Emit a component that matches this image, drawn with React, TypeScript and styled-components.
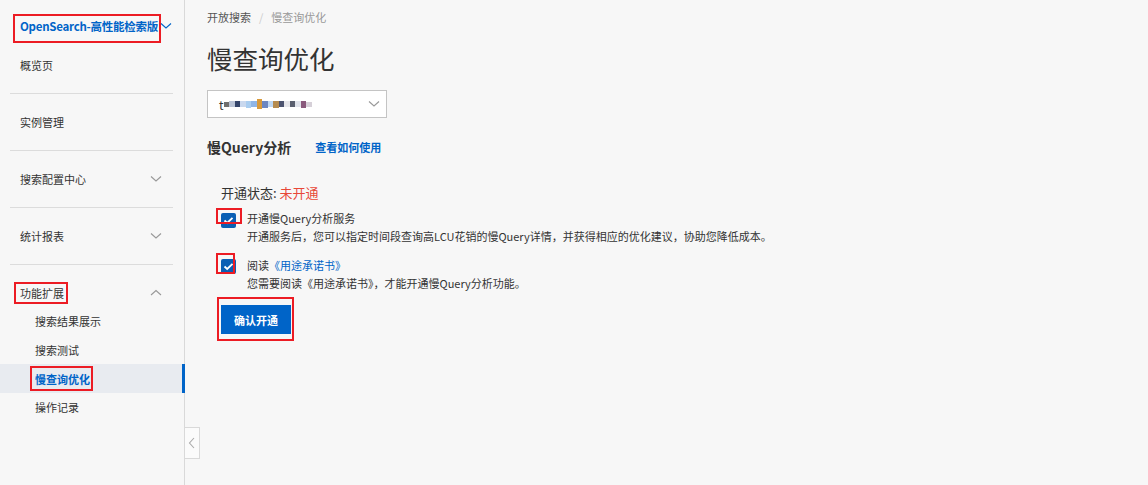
import styled, { createGlobalStyle } from "styled-components";

const GlobalStyle = createGlobalStyle`
  html, body {
    margin: 0;
    padding: 0;
    background: #f7f7f7;
    font-family: "Noto Sans CJK SC", "Noto Sans", sans-serif;
    color: #333;
  }
`;

const Page = styled.div`
  display: flex;
  width: 1148px;
  height: 485px;
  background: #f7f7f7;
  overflow: hidden;
`;

const Sidebar = styled.aside`
  position: relative;
  width: 184px;
  flex-shrink: 0;
  border-right: 1px solid #d9d9d9;
  background: #f7f7f7;
  display: flex;
  flex-direction: column;
`;

const Header = styled.div`
  height: 51px;
  display: flex;
  align-items: center;
  padding-left: 20px;
  color: #0064c8;
  font-size: 11.5px;
  font-weight: 700;
  line-height: 16px;
  letter-spacing: -0.25px;
  white-space: nowrap;
`;

const Marked = styled.span<{ $t: number; $r: number; $b: number; $l: number }>`
  position: relative;
  display: inline-flex;
  &::after {
    content: "";
    position: absolute;
    top: ${(p) => -p.$t}px;
    right: ${(p) => -p.$r}px;
    bottom: ${(p) => -p.$b}px;
    left: ${(p) => -p.$l}px;
    border: 2px solid #ec1c24;
    pointer-events: none;
  }
`;

const MenuItem = styled.div<{ $sub?: boolean; $active?: boolean }>`
  position: relative;
  height: ${(p) => (p.$sub ? 28.7 : 28)}px;
  display: flex;
  align-items: center;
  justify-content: space-between;
  padding: 0 22px 0 ${(p) => (p.$sub ? 35 : 20)}px;
  font-size: 11px;
  line-height: 16px;
  color: ${(p) => (p.$active ? "#0064c8" : "#333")};
  font-weight: ${(p) => (p.$active ? 700 : 400)};
  background: ${(p) => (p.$active ? "#e8ebf0" : "transparent")};
  &::after {
    content: "";
    display: ${(p) => (p.$active ? "block" : "none")};
    position: absolute;
    top: 0;
    right: -1px;
    bottom: 0;
    width: 3px;
    background: #0064c8;
  }
`;

const Divider = styled.div`
  height: 1px;
  margin: 14px 11px 14px 10px;
  background: #dcdcdc;
`;

const Chevron = ({ dir = "down", color = "#999" }: { dir?: "down" | "up" | "left"; color?: string }) => {
  const d =
    dir === "down" ? "M1 3.5 L6 8 L11 3.5" : dir === "up" ? "M1 8 L6 3.5 L11 8" : "M8 1 L3.5 6 L8 11";
  return (
    <svg width="12" height="12" viewBox="0 0 12 12" fill="none">
      <path d={d} stroke={color} strokeWidth="1.1" />
    </svg>
  );
};

const HeaderChevron = styled.span`
  display: inline-flex;
  margin-left: 2px;
`;

const CollapseTab = styled.div`
  position: absolute;
  left: 185px;
  top: 427px;
  width: 14px;
  height: 30px;
  background: #fbfbfb;
  border: 1px solid #d9d9d9;
  border-left: none;
  display: flex;
  align-items: center;
  justify-content: center;
`;

const Main = styled.main`
  flex: 1;
  padding: 9px 0 0 22px;
  display: flex;
  flex-direction: column;
  align-items: flex-start;
`;

const Breadcrumb = styled.div`
  font-size: 11px;
  line-height: 16px;
  display: flex;
  gap: 8px;
`;

const Crumb = styled.span<{ $muted?: boolean }>`
  color: ${(p) => (p.$muted ? "#999" : "#555")};
`;

const Sep = styled.span`
  color: #ccc;
`;

const Title = styled.h1`
  margin: 15px 0 0;
  font-size: 25.5px;
  line-height: 36px;
  font-weight: 400;
  color: #333;
`;

const Select = styled.div`
  margin-top: 14px;
  height: 26px;
  border: 1px solid #c4c4c4;
  background: #fff;
  display: flex;
  align-items: center;
  justify-content: space-between;
  padding: 0 6px 0 11px;
  width: 161px;
`;

const Mosaic = styled.div`
  display: flex;
  align-items: center;
  font-size: 12px;
  color: #333;
`;

const Pixel = styled.span<{ $c: string; $h: number }>`
  display: inline-block;
  width: 5.5px;
  height: ${(p) => p.$h}px;
  background: ${(p) => p.$c};
  filter: blur(0.6px);
`;

const SectionHead = styled.div`
  margin-top: 19px;
  display: flex;
  align-items: center;
  gap: 24px;
`;

const SectionTitle = styled.span`
  font-size: 14px;
  font-weight: 700;
  line-height: 20px;
  color: #333;
`;

const Link = styled.a`
  font-size: 11px;
  font-weight: 700;
  color: #0064c8;
  text-decoration: none;
`;

const Body = styled.div`
  padding-left: 14px;
  margin-top: 26px;
  display: flex;
  flex-direction: column;
  align-items: flex-start;
`;

const Status = styled.div`
  font-size: 13px;
  line-height: 20px;
  color: #333;
`;

const StatusValue = styled.span`
  color: #e84738;
`;

const CheckRow = styled.div<{ $gap: number }>`
  display: flex;
  align-items: flex-start;
  gap: 11px;
  margin-top: ${(p) => p.$gap}px;
`;

const CheckCell = styled.div<{ $top: number }>`
  display: flex;
  padding-top: ${(p) => p.$top}px;
`;

const Box = styled.span`
  width: 15px;
  height: 15px;
  border-radius: 2px;
  background: #0a5fb4;
  display: inline-flex;
  align-items: center;
  justify-content: center;
`;

const CheckText = styled.div`
  display: flex;
  flex-direction: column;
  gap: 2px;
  font-size: 11px;
  line-height: 16px;
`;

const Label = styled.span`
  color: #333;
`;

const Desc = styled.span`
  color: #333;
`;

const InlineLink = styled.span`
  color: #0064c8;
`;

const ButtonRow = styled.div`
  margin-top: 14px;
  display: flex;
`;

const Button = styled.button`
  width: 70px;
  height: 29px;
  border: none;
  background: #0064c8;
  color: #fff;
  font-family: inherit;
  font-size: 11px;
  font-weight: 700;
  padding: 0;
`;

const Check = () => (
  <svg width="11" height="9" viewBox="0 0 11 9" fill="none">
    <path d="M1.5 4.5 L4.2 7 L9.5 1.8" stroke="#fff" strokeWidth="1.8" />
  </svg>
);

const pixels: [string, number][] = [
  ["#6e6e6e", 5],
  ["#b9c3d6", 6],
  ["#34446a", 6],
  ["#c9d8ee", 6],
  ["#a9cdf0", 7],
  ["#8fb5e6", 6],
  ["#d89a3c", 10],
  ["#6c87c2", 7],
  ["#bed7f2", 6],
  ["#b58b50", 7],
  ["#4d5470", 6],
  ["#e6e6ea", 6],
  ["#5a5f6f", 6],
  ["#dfe2ea", 6],
  ["#8a5a7c", 7],
  ["#d6d0d8", 5],
];

function App() {
  return (
    <Page>
      <GlobalStyle />
      <Sidebar>
        <Header>
          <Marked $t={4} $r={3} $b={9} $l={7}>
            OpenSearch-高性能检索版
          </Marked>
          <HeaderChevron>
            <Chevron color="#0064c8" />
          </HeaderChevron>
        </Header>
        <MenuItem>概览页</MenuItem>
        <Divider />
        <MenuItem>实例管理</MenuItem>
        <Divider />
        <MenuItem>
          搜索配置中心
          <Chevron />
        </MenuItem>
        <Divider />
        <MenuItem>
          统计报表
          <Chevron />
        </MenuItem>
        <Divider />
        <MenuItem>
          <Marked $t={3} $r={4} $b={3} $l={6}>
            功能扩展
          </Marked>
          <Chevron dir="up" />
        </MenuItem>
        <MenuItem $sub>搜索结果展示</MenuItem>
        <MenuItem $sub>搜索测试</MenuItem>
        <MenuItem $sub $active>
          <Marked $t={5} $r={3} $b={4} $l={5}>
            慢查询优化
          </Marked>
        </MenuItem>
        <MenuItem $sub>操作记录</MenuItem>
        <CollapseTab>
          <Chevron dir="left" color="#aaa" />
        </CollapseTab>
      </Sidebar>
      <Main>
        <Breadcrumb>
          <Crumb>开放搜索</Crumb>
          <Sep>/</Sep>
          <Crumb $muted>慢查询优化</Crumb>
        </Breadcrumb>
        <Title>慢查询优化</Title>
        <Select>
          <Mosaic>
            t
            {pixels.map(([c, h], i) => (
              <Pixel key={i} $c={c} $h={h} />
            ))}
          </Mosaic>
          <Chevron />
        </Select>
        <SectionHead>
          <SectionTitle>慢Query分析</SectionTitle>
          <Link>查看如何使用</Link>
        </SectionHead>
        <Body>
          <Status>
            开通状态: <StatusValue>未开通</StatusValue>
          </Status>
          <CheckRow $gap={7}>
            <CheckCell $top={3}>
              <Marked $t={5} $r={6} $b={-4} $l={5}>
                <Box>
                  <Check />
                </Box>
              </Marked>
            </CheckCell>
            <CheckText>
              <Label>开通慢Query分析服务</Label>
              <Desc>开通服务后，您可以指定时间段查询高LCU花销的慢Query详情，并获得相应的优化建议，协助您降低成本。</Desc>
            </CheckText>
          </CheckRow>
          <CheckRow $gap={13}>
            <CheckCell $top={2}>
              <Marked $t={6} $r={-1} $b={0} $l={5}>
                <Box>
                  <Check />
                </Box>
              </Marked>
            </CheckCell>
            <CheckText>
              <Label>
                阅读<InlineLink>《用途承诺书》</InlineLink>
              </Label>
              <Desc>您需要阅读《用途承诺书》，才能开通慢Query分析功能。</Desc>
            </CheckText>
          </CheckRow>
          <ButtonRow>
            <Marked $t={8} $r={3} $b={7} $l={4}>
              <Button>确认开通</Button>
            </Marked>
          </ButtonRow>
        </Body>
      </Main>
    </Page>
  );
}

export default App;
